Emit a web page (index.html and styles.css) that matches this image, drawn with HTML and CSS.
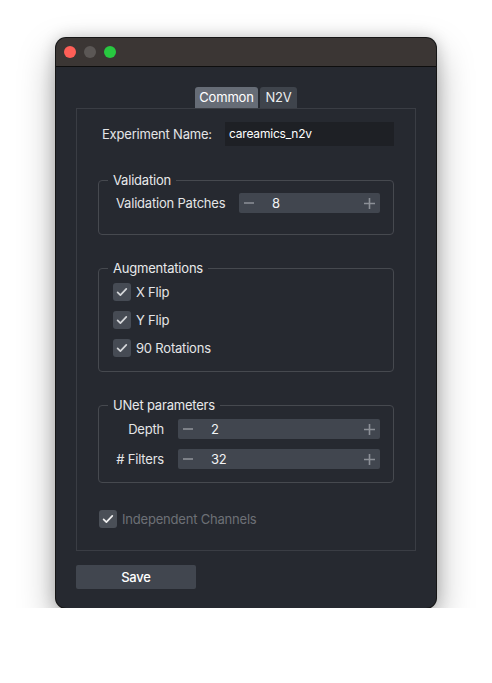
FILE: index.html
```html
<!DOCTYPE html>
<html>
<head>
<meta charset="utf-8">
<link rel="stylesheet" href="styles.css">
</head>
<body>
<div class="window">
  <div class="titlebar">
    <span class="light red"></span><span class="light gray"></span><span class="light green"></span>
  </div>
  <div class="content">
    <div class="tabs">
      <div class="tab active">Common</div>
      <div class="tab n2v">N2V</div>
    </div>
    <div class="pane">
      <div class="name-row">
        <span class="name-label">Experiment Name:</span>
        <div class="input">careamics_n2v</div>
      </div>

      <fieldset class="group group-val">
        <legend>Validation</legend>
        <div class="val-row">
          <span class="val-label">Validation Patches</span>
          <div class="spin spin-val">
            <svg class="minus" width="10" height="10" viewBox="0 0 10 10"><path d="M0 5H10"/></svg>
            <span class="spin-value">8</span>
            <svg class="plus" width="11" height="11" viewBox="0 0 11 11"><path d="M0 5.5H11M5.5 0V11"/></svg>
          </div>
        </div>
      </fieldset>

      <fieldset class="group group-aug">
        <legend>Augmentations</legend>
        <div class="checks">
          <div class="check-row">
            <span class="box"><svg width="18" height="18" viewBox="0 0 18 18"><path d="M4.6 9.3L7.4 12.1L13.3 5.8"/></svg></span>
            <span>X Flip</span>
          </div>
          <div class="check-row">
            <span class="box"><svg width="18" height="18" viewBox="0 0 18 18"><path d="M4.6 9.3L7.4 12.1L13.3 5.8"/></svg></span>
            <span>Y Flip</span>
          </div>
          <div class="check-row">
            <span class="box"><svg width="18" height="18" viewBox="0 0 18 18"><path d="M4.6 9.3L7.4 12.1L13.3 5.8"/></svg></span>
            <span>90 Rotations</span>
          </div>
        </div>
      </fieldset>

      <fieldset class="group group-unet">
        <legend>UNet parameters</legend>
        <div class="unet-grid">
          <span class="unet-label">Depth</span>
          <div class="spin spin-unet">
            <svg class="minus" width="10" height="10" viewBox="0 0 10 10"><path d="M0 5H10"/></svg>
            <span class="spin-value">2</span>
            <svg class="plus" width="11" height="11" viewBox="0 0 11 11"><path d="M0 5.5H11M5.5 0V11"/></svg>
          </div>
          <span class="unet-label"># Filters</span>
          <div class="spin spin-unet">
            <svg class="minus" width="10" height="10" viewBox="0 0 10 10"><path d="M0 5H10"/></svg>
            <span class="spin-value">32</span>
            <svg class="plus" width="11" height="11" viewBox="0 0 11 11"><path d="M0 5.5H11M5.5 0V11"/></svg>
          </div>
        </div>
      </fieldset>

      <div class="check-row indep">
        <span class="box box-disabled"><svg width="18" height="18" viewBox="0 0 18 18"><path d="M4.6 9.3L7.4 12.1L13.3 5.8"/></svg></span>
        <span class="disabled-text">Independent Channels</span>
      </div>
    </div>
    <button class="save">Save</button>
  </div>
</div>
</body>
</html>
```

FILE: styles.css
```css
* { box-sizing: border-box; }

html, body {
  margin: 0;
  background: #ffffff;
}

body {
  padding: 38px 0 0 56px;
  font-family: Inter, "Noto Sans", "DejaVu Sans", sans-serif;
  font-size: 13px;
  letter-spacing: -0.2px;
  color: #e4e5e7;
}

.window {
  width: 380px;
  height: 570px;
  border-radius: 10px;
  overflow: hidden;
  background: #262930;
  box-shadow:
    0 0 0 1px #161616,
    0 16px 36px rgba(0, 0, 0, 0.34),
    0 0 16px rgba(0, 0, 0, 0.2);
}

.titlebar {
  height: 29px;
  background: #3b3634;
  border-bottom: 1px solid #0e0e0e;
  display: flex;
  align-items: center;
  gap: 8px;
  padding: 0 0 1px 8px;
}

.light {
  width: 12px;
  height: 12px;
  border-radius: 50%;
  display: block;
}
.red { background: #fe5f57; }
.gray { background: #5b5755; }
.green { background: #28c840; }

.content {
  padding: 20px 20px 19px 20px;
}

.tabs {
  display: flex;
  justify-content: center;
  gap: 2px;
  height: 21px;
}

.tab {
  height: 21px;
  line-height: 21px;
  background: #3f444c;
  border-radius: 3px 3px 0 0;
  color: #eceef0;
  font-size: 13px;
  text-align: center;
}
.tab.active {
  background: #666c76;
  color: #ffffff;
  width: 63px;
}
.tab.n2v { width: 37px; }

.pane {
  border: 1px solid #3a3d44;
  padding: 13px 21px 22px 21px;
}

.name-row {
  display: flex;
  align-items: center;
  height: 24px;
  padding-left: 4px;
}
.name-label {
  width: 123px;
  flex: none;
}
.input {
  width: 169px;
  height: 24px;
  background: #1e2025;
  color: #ffffff;
  font-size: 12px;
  line-height: 24px;
  padding-left: 4px;
}

.group {
  margin: 0;
  padding: 0;
  border: 1px solid #46494f;
  border-radius: 4px;
  min-width: 0;
}
.group legend {
  margin-left: 9px;
  padding: 0 5px;
  line-height: 16px;
  height: 16px;
  color: #e8e9eb;
}

.group-val {
  margin-top: 26px;
  padding: 5px 0 21px 0;
}
.group-aug {
  margin-top: 25px;
  padding: 7px 0 14px 0;
}
.group-unet {
  margin-top: 25px;
  padding: 6px 0 13px 0;
}

.val-row {
  display: flex;
  align-items: center;
  padding-left: 17px;
}
.val-label {
  width: 123px;
  flex: none;
}

.spin {
  height: 20px;
  background: #41464f;
  border-radius: 2px;
  display: flex;
  align-items: center;
  padding: 0 5px;
  color: #f2f3f5;
}
.spin-val { width: 141px; }
.spin-unet { width: 202px; }
.spin svg path {
  stroke: #8c9097;
  stroke-width: 1.6;
  fill: none;
}
.spin .minus { flex: none; }
.spin-value {
  margin-left: 18px;
  flex: 1;
}
.spin .plus { flex: none; }

.checks {
  display: flex;
  flex-direction: column;
  gap: 10px;
  padding-left: 14px;
}
.check-row {
  display: flex;
  align-items: center;
  gap: 5px;
  height: 18px;
}
.box {
  width: 18px;
  height: 18px;
  border-radius: 3px;
  background: #464b54;
  flex: none;
  display: block;
}
.box svg { display: block; }
.box svg path {
  stroke: #d4d6d9;
  stroke-width: 1.7;
  fill: none;
  stroke-linecap: round;
  stroke-linejoin: round;
}
.box-disabled { background: #4a4f57; }
.box-disabled svg path { stroke: #f0f0f0; }

.unet-grid {
  display: grid;
  grid-template-columns: 65px 202px;
  column-gap: 14px;
  row-gap: 10px;
  align-items: center;
}
.unet-label {
  display: flex;
  justify-content: flex-end;
  white-space: nowrap;
}

.indep {
  margin-top: 27px;
  margin-left: 1px;
}
.disabled-text {
  color: #6d7076;
}

.save {
  display: block;
  margin-top: 14px;
  width: 120px;
  height: 24px;
  border: none;
  border-radius: 2px;
  background: #41464f;
  color: #ffffff;
  font-family: Inter, "Noto Sans", sans-serif;
  font-size: 13px;
  font-weight: 500;
  letter-spacing: -0.2px;
  padding: 0;
}
```
